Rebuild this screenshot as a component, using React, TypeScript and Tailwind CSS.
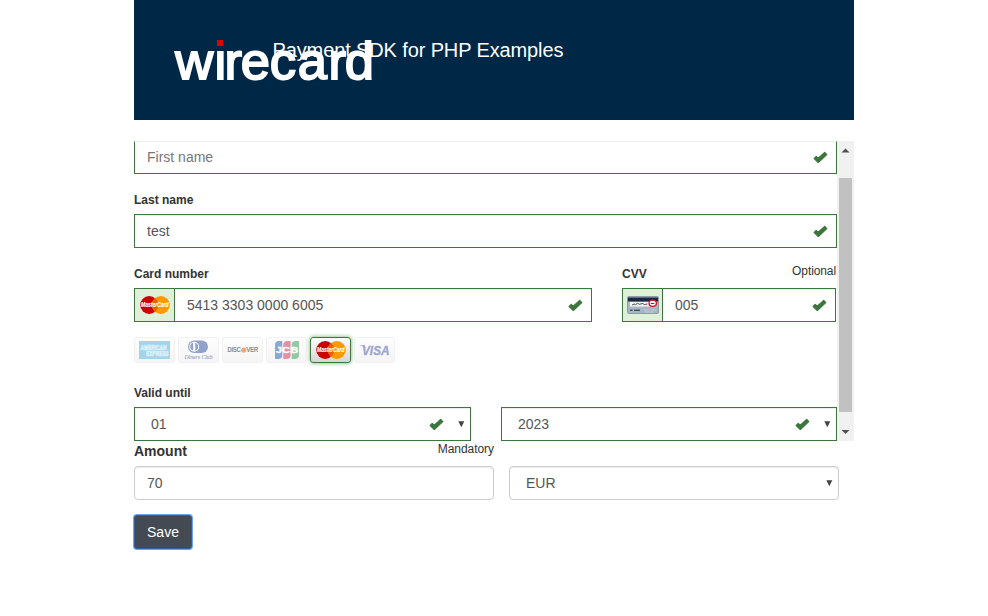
import type { ReactNode } from "react";

const Check = () => (
  <svg width="15" height="12" viewBox="0 0 15 12" className="shrink-0" fill="#3c763d" stroke="#3c763d" strokeWidth="1.200" strokeLinejoin="round">
    <path d="M1.200 7.500 L3.200 5.500 L5.200 7.300 L11.700 1.400 L13.800 3.600 L5.300 11.500 Z" />
  </svg>
);

const Arrow = () => (
  <svg width="7" height="7" viewBox="0 0 7 7" className="shrink-0">
    <path d="M0.300 0.300H6.300L3.300 6.300Z" fill="#444" />
  </svg>
);

const MasterCard = () => (
  <svg width="32" height="20" viewBox="0 0 32 20">
    <circle cx="10.200" cy="10" r="9" fill="#cc0000" />
    <circle cx="21.800" cy="10" r="9" fill="#ff9900" />
    <path d="M16 3.100a9 9 0 0 1 0 13.800a9 9 0 0 1 0-13.800" fill="#e8600a" />
    <text x="2" y="12.300" textLength="27.500" lengthAdjust="spacingAndGlyphs" fontSize="7" fontWeight="bold" fontStyle="italic" fill="#fff" stroke="#fff" strokeWidth="0.150">
      MasterCard
    </text>
  </svg>
);

const CvvCard = () => (
  <svg width="32" height="18" viewBox="0 0 32 18">
    <defs>
      <linearGradient id="cardBack" x1="0" y1="0" x2="0" y2="1">
        <stop offset="0" stopColor="#aebdcb" />
        <stop offset="1" stopColor="#a3b4c2" />
      </linearGradient>
    </defs>
    <rect x="0.500" y="0.500" width="31" height="17" rx="1.200" fill="url(#cardBack)" stroke="#8f9ba5" />
    <rect x="1" y="1.500" width="30" height="4" fill="#1b2740" />
    <rect x="3" y="6" width="20" height="4.500" fill="#f4f5f7" />
    <path d="M5 9l2-1 1.500.6 2-1.300 2 1 3-.8 2 1 3-.5" fill="none" stroke="#222" strokeWidth="0.800" />
    <path d="M3 14.200h2.500M7 14.200h6" stroke="#222" strokeWidth="1" />
    <path d="M17 14h5m2 0h5M18 16h9" stroke="#c3cdd6" strokeWidth="1" />
    <ellipse cx="25.700" cy="7.300" rx="3.700" ry="3.100" fill="#fff" stroke="#e0101a" strokeWidth="1.300" />
    <path d="M23.700 7.500h3.600" stroke="#444" strokeWidth="1" />
  </svg>
);

const Amex = () => (
  <svg width="31" height="18" viewBox="0 0 31 18">
    <rect width="31" height="18" fill="#a2d4ec" />
    <g fill="#a2d4ec" stroke="#dff1f9" strokeWidth="0.700" fontWeight="bold" fontSize="6.500">
      <text x="1.500" y="8.500" textLength="26" lengthAdjust="spacingAndGlyphs">AMERICAN</text>
      <text x="7" y="14.500" textLength="22.500" lengthAdjust="spacingAndGlyphs">EXPRESS</text>
    </g>
  </svg>
);

const Diners = () => (
  <svg width="32" height="20" viewBox="0 0 32 20">
    <rect x="5" y="0.500" width="20" height="12.500" rx="6.250" fill="#91a1ca" />
    <circle cx="11.200" cy="6.700" r="5" fill="#f9f9fb" />
    <path d="M10.100 2.800a4.100 4.100 0 0 0 0 7.800zM12.300 2.800a4.100 4.100 0 0 1 0 7.800z" fill="#91a1ca" />
    <text x="1.500" y="18.500" textLength="28" lengthAdjust="spacingAndGlyphs" fontSize="7" fontStyle="italic" fontFamily="Liberation Serif, serif" fill="#8d9cc4" stroke="#8d9cc4" strokeWidth="0.100">
      Diners Club
    </text>
  </svg>
);

const Discover = () => (
  <svg width="32" height="18" viewBox="0 0 32 18">
    <circle cx="16.800" cy="9" r="2.600" fill="#f5a477" />
    <g fontSize="6.500" fill="#777" stroke="#777" strokeWidth="0.200">
      <text x="0.500" y="11.200" textLength="13.200" lengthAdjust="spacingAndGlyphs">DISC</text>
      <text x="19.400" y="11.200" textLength="11.600" lengthAdjust="spacingAndGlyphs">VER</text>
    </g>
  </svg>
);

const Jcb = () => (
  <svg width="26" height="20" viewBox="0 0 26 20">
    <path d="M1 5a4 4 0 0 1 4-4h3.300v14a4 4 0 0 1-4 4H1z" fill="#89a8d4" />
    <path d="M9.300 5a4 4 0 0 1 4-4h3.300v14a4 4 0 0 1-4 4H9.300z" fill="#e290a5" />
    <path d="M17.600 5a4 4 0 0 1 4-4H25v14a4 4 0 0 1-4 4h-3.400z" fill="#91c9a0" />
    <text x="1.800" y="13" textLength="22.500" lengthAdjust="spacingAndGlyphs" fontSize="8.500" fontWeight="bold" fill="#fff" stroke="#fff" strokeWidth="0.300">JCB</text>
  </svg>
);

const Visa = () => (
  <svg width="32" height="18" viewBox="0 0 32 18">
    <text x="3" y="13.500" textLength="27.500" lengthAdjust="spacingAndGlyphs" fontSize="13" fontStyle="italic" fontWeight="bold" fill="#9aa5d0" stroke="#9aa5d0" strokeWidth="0.300">VISA</text>
    <path d="M0.300 4.200h5.500l1 3.500Q4 5 .3 4.200" fill="#9aa5d0" />
  </svg>
);

const Brand = ({ children, active }: { children: ReactNode; active?: boolean }) => (
  <div
    className={
      active
        ? "flex h-[26px] w-[41px] items-center justify-center rounded-[3px] border border-[#3c763d] bg-linear-to-b from-white to-[#d5d5d5] shadow-[0_0_4px_#67b168]"
        : "flex h-[26px] w-[41px] items-center justify-center rounded-[3px] border border-[#f1f1f1] bg-linear-to-b from-[#fdfdfd] to-[#f5f5f5]"
    }
  >
    {children}
  </div>
);

const Field = ({ text, addon }: { text: string; addon?: ReactNode }) => (
  <div className="flex h-[34px] border border-[#3c763d] bg-white text-sm text-[#555]">
    {addon && <div className="flex w-10 items-center justify-center border-r border-[#3c763d] bg-[#dff0d8]">{addon}</div>}
    <div className="flex grow items-center justify-between pr-2 pl-3 shadow-[inset_0_1px_1px_rgba(0,0,0,0.075)]">
      <span>{text}</span>
      <Check />
    </div>
  </div>
);

const Select = ({ text }: { text: string }) => (
  <div className="flex h-[34px] items-center border border-[#3c763d] pr-[5px] pl-4 text-sm text-[#555] shadow-[inset_0_1px_1px_rgba(0,0,0,0.075)]">
    <span className="grow">{text}</span>
    <Check />
    <div className="ml-3.5"><Arrow /></div>
  </div>
);

export default function App() {
  return (
    <div className="h-[616px] overflow-hidden bg-white font-['Liberation_Sans',Arial,sans-serif] text-[#333]">
      <div className="mx-auto w-[720px]">
        <header className="relative h-[120px] bg-[#002846] pt-[38px] pl-[138.500px]">
          <h1 className="text-[20px] leading-6 tracking-[-0.12px] whitespace-nowrap text-white">Payment SDK for PHP Examples</h1>
          <svg className="absolute top-[35px] left-[38px]" width="206" height="52" viewBox="0 0 206 52">
            <text x="3.200 42.500 52.400 68.800 97.700 125.800 156.400 172.800" y="43.600" fontSize="52.500" fill="#fff" stroke="#fff" strokeWidth="1.900">wirecard</text>
            <rect x="44" y="3" width="9" height="9" fill="#002846" />
            <rect x="45" y="5" width="6.300" height="6" fill="#e10000" />
          </svg>
        </header>

        <section className="mt-[21px] flex h-[300px] overflow-hidden">
          <div className="w-[703px]">
            <div className="h-[33px] border-x border-b border-t border-[#3c763d] border-t-[#eee] text-sm">
              <div className="flex h-[30px] items-center justify-between pr-2 pl-3 text-[#777]">
                <span>First name</span>
                <Check />
              </div>
            </div>
            <div className="mt-[18px] mb-[5px] text-xs leading-[17px] font-bold">Last name</div>
            <Field text="test" />
            <div className="mt-[15px] flex gap-[30px] pr-px">
              <div className="w-[458px]">
                <div className="h-[25px] pt-[3px] text-xs leading-[17px] font-bold">Card number</div>
                <Field text="5413 3303 0000 6005" addon={<MasterCard />} />
              </div>
              <div className="w-[214px]">
                <div className="flex h-[25px] justify-between text-xs leading-[17px]">
                  <b className="pt-[3px]">CVV</b>
                  <span className="tracking-[-0.1px]">Optional</span>
                </div>
                <Field text="005" addon={<CvvCard />} />
              </div>
            </div>
            <div className="mt-[15px] flex gap-[3px]">
              <Brand><Amex /></Brand>
              <Brand><Diners /></Brand>
              <Brand><Discover /></Brand>
              <Brand><Jcb /></Brand>
              <Brand active><MasterCard /></Brand>
              <Brand><Visa /></Brand>
            </div>
            <div className="mt-[22px] mb-[5px] text-xs leading-[17px] font-bold">Valid until</div>
            <div className="flex gap-[30px]">
              <div className="w-[337px]"><Select text="01" /></div>
              <div className="w-[336px]"><Select text="2023" /></div>
            </div>
          </div>
          <div className="flex w-[17px] flex-col items-center bg-[#f1f1f1]">
            <svg width="17" height="37" viewBox="0 0 17 37"><path d="M4.500 11.500h8L8.500 7.500Z" fill="#505050" /></svg>
            <div className="h-[234px] w-[13px] bg-[#c1c1c1]" />
            <svg width="17" height="29" viewBox="0 0 17 29"><path d="M4.500 18h8L8.500 22Z" fill="#505050" /></svg>
          </div>
        </section>

        <section className="flex gap-[15px]">
          <div className="w-[360px]">
            <div className="flex h-[25px] justify-between">
              <b className="text-sm leading-5">Amount</b>
              <span className="text-xs leading-4 tracking-[-0.05px]">Mandatory</span>
            </div>
            <div className="flex h-[34px] items-center rounded border border-[#ccc] px-3 text-sm text-[#555] shadow-[inset_0_1px_1px_rgba(0,0,0,0.075)]">70</div>
          </div>
          <div className="w-[330px] pt-[25px]">
            <div className="flex h-[34px] items-center justify-between rounded border border-[#ccc] pr-[5px] pl-4 text-sm text-[#555] shadow-[inset_0_1px_1px_rgba(0,0,0,0.075)]">
              EUR
              <Arrow />
            </div>
          </div>
        </section>

        <button className="mt-[15px] flex h-[34px] w-[58px] items-center justify-center rounded-[3px] border border-[#2f5f9f] bg-[#434a54] text-sm text-white shadow-[0_0_0_1px_#6ea5f0]">
          Save
        </button>
      </div>
    </div>
  );
}
